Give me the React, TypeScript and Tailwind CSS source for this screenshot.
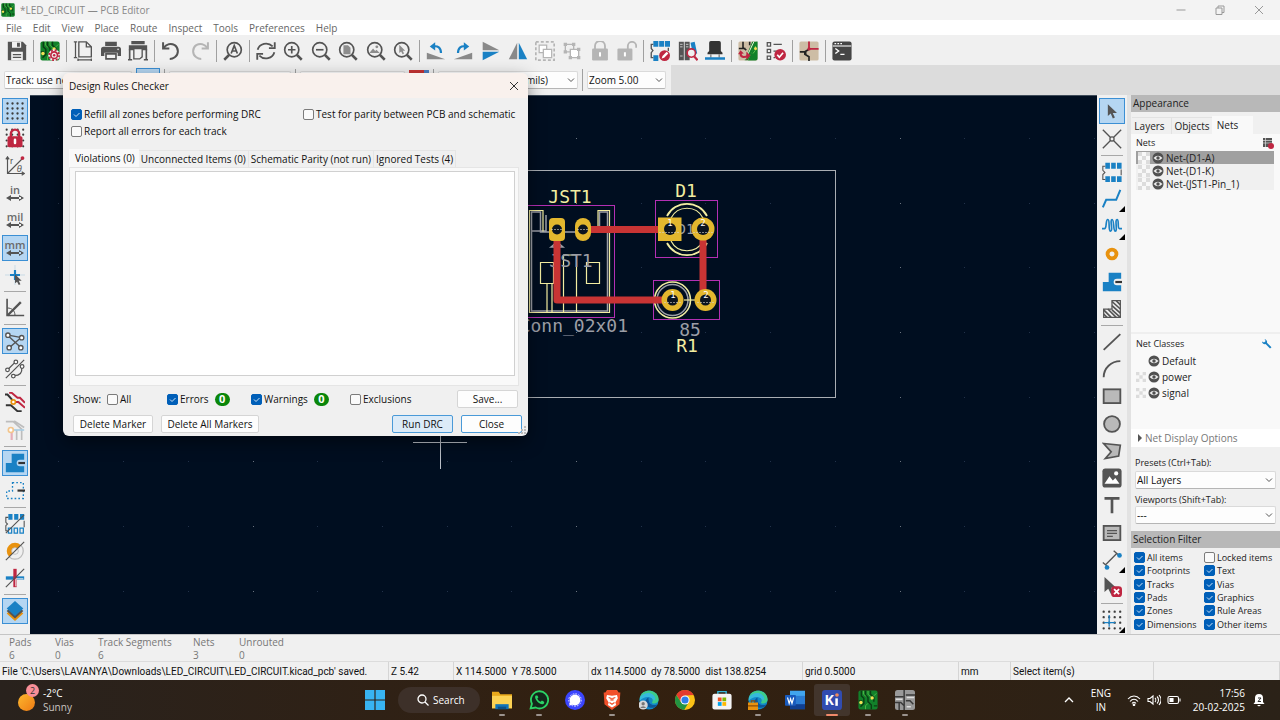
import React from "react";

const G = "#545454";
const B = "#1a81c4";
const R = "#bf2641";
const D = "#b5b5b5";

type Draw = React.ReactNode;

function Svg({ children, className = "size-5" }: { children: Draw; className?: string }) {
  return (
    <svg viewBox="0 0 24 24" fill="none" className={`${className} shrink-0`} aria-hidden="true">
      {children}
    </svg>
  );
}

const magnifier = (
  <>
    <circle cx="10.5" cy="10.5" r="8.5" stroke={G} strokeWidth="2" />
    <path d="M16.5 16.5L22.5 22.5" stroke={G} strokeWidth="3" />
  </>
);

const pcb = (
  <>
    <rect x="0.5" y="0.5" width="23" height="23" rx="2.5" fill="#12812a" />
    <path d="M4 1v6l3 3v6l-4 4M9 1v5l3 3v5l4 4v5M15 1v4l4 4v5M1 13h4M19 19h4" stroke="#0b3d14" strokeWidth="1.7" />
    <path d="M6.5 1v4l3.500 3M12 1v4l4 4v3M9 23v-4l3-3M22 4l-3 3" stroke="#5dbf4c" strokeWidth="1" />
    <circle cx="3.5" cy="15" r="2" fill="#f7e157" />
    <circle cx="17" cy="9.5" r="2" fill="#f7e157" />
  </>
);

const icons: Record<string, Draw> = {
  save: (
    <>
      <path d="M1 1h18l4 4v18H1z" fill={G} />
      <path d="M6 1h11v7H6zM5 13h14v10H5z" fill="#f0f0f0" />
      <path d="M12 2h3.500v5H12zM7 15.500h10v1.500H7zM7 19h10v1.500H7z" fill={G} />
    </>
  ),
  setup: (
    <>
      {pcb}
      <circle cx="17" cy="17" r="7" fill="#f0f0f0" />
      <circle cx="17" cy="17" r="4" stroke={R} strokeWidth="2" />
      <circle cx="17" cy="17" r="6" stroke={R} strokeWidth="2" strokeDasharray="2.400 2.300" />
      <circle cx="17" cy="17" r="1.500" fill={R} />
    </>
  ),
  page: (
    <>
      <path d="M7 1h9l6 6v12H7zM16 1v6h6" stroke={G} strokeWidth="1.600" />
      <path d="M3 1v19M1 1h4M1 20h4M6 22.500h16M6 21v3M22 21v3" stroke={G} strokeWidth="1.500" />
    </>
  ),
  print: (
    <>
      <path d="M5 1h14v5H5zM3 7h18a3 3 0 0 1 3 3v8h-4v-4H4v4H0v-8a3 3 0 0 1 3-3z" fill={G} />
      <path d="M6 15.500h12v6H6z" stroke={G} strokeWidth="2" />
      <circle cx="20.500" cy="10" r="1" fill="#f0f0f0" />
    </>
  ),
  plot: (
    <>
      <path d="M4 0h16v4H4zM1 5h22v6H1z" fill={G} />
      <path d="M2 10v13M22 10v13M0 22.500h5M19 22.500h5" stroke={G} strokeWidth="2" />
      <path d="M7 9h10v10l-3 2.500H7z" fill="#f0f0f0" stroke={G} strokeWidth="1.600" />
    </>
  ),
  undo: <path d="M2.500 1.500v7.500H10M3 8.500C6.500 3.500 12 2.500 16.500 5c5 3.500 5 11 0 14.500-2 1.500-4 2-6 2" stroke={G} strokeWidth="2.400" />,
  redo: <path d="M21.500 1.500v7.500H14M21 8.500C17.500 3.500 12 2.500 7.500 5c-5 3.500-5 11 0 14.500 2 1.500 4 2 6 2" stroke={D} strokeWidth="2.400" />,
  find: (
    <>
      <circle cx="13.500" cy="10.500" r="8.500" stroke={G} strokeWidth="2" />
      <path d="M7.500 16.500L1.500 22.500" stroke={G} strokeWidth="3" />
      <path d="M9.800 15l3.700-9.500L17.200 15M11 12h5" stroke={G} strokeWidth="2" />
    </>
  ),
  refresh: (
    <>
      <path d="M2 10.500C4 3 14 0.500 20 6.500M22 13.500C20 21 10 23.500 4 17.500" stroke={G} strokeWidth="2.200" />
      <path d="M22.500 1.500v7h-7M1.500 22.500v-7h7" stroke={G} strokeWidth="2.200" />
    </>
  ),
  zoomin: (
    <>
      {magnifier}
      <path d="M10.500 6v9M6 10.500h9" stroke={G} strokeWidth="2" />
    </>
  ),
  zoomout: (
    <>
      {magnifier}
      <path d="M6 10.500h9" stroke={G} strokeWidth="2" />
    </>
  ),
  zoompage: (
    <>
      {magnifier}
      <path d="M6.500 5h5.500l3 3v8H6.500z" fill="#8d8d8d" />
    </>
  ),
  zoomobj: (
    <>
      {magnifier}
      <path d="M4 14.500l4.500-5.500 2.500 3 1.500-1.500 4 4z" fill="#8d8d8d" />
      <circle cx="13" cy="7" r="1.700" fill="#8d8d8d" />
    </>
  ),
  zoomsel: (
    <>
      {magnifier}
      <path d="M7.500 4.500v10l2.300-2 1.700 3.500 1.800-1-1.600-3.300h3z" fill="#8d8d8d" />
    </>
  ),
  rotl: (
    <>
      <path d="M1 14l22 8H1z" fill="#898989" />
      <path d="M9 6.500c5-1 9 1.500 9 8" stroke={B} strokeWidth="2.600" />
      <path d="M11 1.500v10L4.500 6.500z" fill={B} />
    </>
  ),
  rotr: (
    <>
      <path d="M23 14L1 22h22z" fill="#898989" />
      <path d="M15 6.500c-5-1-9 1.500-9 8" stroke={B} strokeWidth="2.600" />
      <path d="M13 1.500v10l6.500-5z" fill={B} />
    </>
  ),
  mirv: (
    <>
      <path d="M2 1l20 10H2z" fill="#898989" />
      <path d="M2 13h20L2 23z" fill={B} />
    </>
  ),
  mirh: (
    <>
      <path d="M11 2v20H1z" fill="#898989" />
      <path d="M13 2v20h10z" fill={B} />
    </>
  ),
  group: (
    <>
      <rect x="1" y="1" width="22" height="22" stroke={D} strokeWidth="2" strokeDasharray="3.500 2.500" />
      <path d="M5 5h9v9H5z" fill="#fff" stroke={D} strokeWidth="1.500" />
      <path d="M10 10h10v10H10z" fill="#fff" stroke={D} strokeWidth="1.500" />
    </>
  ),
  ungroup: (
    <>
      <path d="M4 4h10v9H4z" stroke={D} strokeWidth="1.600" />
      <path d="M10 10h10v10H10z" fill="#fff" stroke={D} strokeWidth="1.600" />
      <path d="M2 2h4v4H2zM12 2h4v4h-4zM2 11h4v4H2zM18 8h4v4h-4zM18 18h4v4h-4zM8 18h4v4H8z" fill={D} />
    </>
  ),
  lock: (
    <>
      <path d="M6 10V6a6 6 0 0 1 12 0v4" stroke={D} strokeWidth="2.200" />
      <rect x="2.500" y="9" width="19" height="14.500" rx="1.500" fill={D} />
      <path d="M12 13.500v5" stroke="#fff" strokeWidth="2.400" />
    </>
  ),
  unlock: (
    <>
      <path d="M13 10V6a5 5 0 0 1 10 0v2" stroke={D} strokeWidth="2.200" />
      <rect x="0.500" y="9" width="18" height="14.500" rx="1.500" fill={D} />
      <path d="M9.500 13.500v5" stroke="#fff" strokeWidth="2.400" />
    </>
  ),
  fpedit: (
    <>
      <path d="M4 0h6v7H4zM11 0h6v7h-6zM18 0h6v7h-6zM4 17h6v7H4z" fill={B} />
      <path d="M4 4H1.500v5l2 2.500-2 2.500v6H4M22 8v4" stroke={G} strokeWidth="1.600" />
      <circle cx="17.500" cy="17.500" r="6.500" fill={R} />
      <path d="M14 21l1-3 5-5 2 2-5 5z" fill="#fff" />
    </>
  ),
  fplib: (
    <>
      <path d="M1 1h6v22H1zM8 1h6v22H8z" fill={G} />
      <path d="M2.500 4h3M9.500 4h3M2.500 7h3M9.500 7h3M2.500 18h3" stroke="#ddd" />
      <path d="M15 2l5-1 3 14-5 1z" fill={B} />
      <circle cx="16" cy="14.500" r="5" fill="#f0f0f0" stroke={R} strokeWidth="2" />
      <path d="M19.500 18.500l4 4.500" stroke={R} strokeWidth="2.600" />
    </>
  ),
  view3d: (
    <>
      <path d="M5 2a2 2 0 0 1 2-2h10a2 2 0 0 1 2 2v10l2 2v2H3v-2l2-2z" fill="#333" />
      <path d="M7 16v4M17 16v4" stroke="#777" strokeWidth="1.500" />
      <path d="M0 19.500h24v3H0z" fill={B} />
    </>
  ),
  update: (
    <>
      <rect x="0.500" y="0.500" width="23" height="23" rx="2" fill="#cdbda5" />
      <path d="M23.500 0.500V21a2.500 2.500 0 0 1-2.500 2.500h-9L22 1z" fill="#12812a" />
      <path d="M17 1h6L12 23h-4z" fill="#12812a" />
      <path d="M19 1L9 22" stroke="#e8f2d8" strokeWidth="1.200" />
      <path d="M6 1v7l4 3M1 9h8M14 1v4" stroke="#222" strokeWidth="1.900" />
      <path d="M21 6v5l-3 4" stroke="#5dbf4c" strokeWidth="1.200" />
      <circle cx="21" cy="9" r="1.800" fill="#f7e157" />
      <path d="M3 14c0 6 4 6 9 4" stroke={R} strokeWidth="2.600" />
      <path d="M10 13l5 4-5 6z" fill={R} />
      <path d="M0 16l3-5 4 4z" fill={R} />
    </>
  ),
  drc: (
    <>
      <path d="M1.500 2h4v4h-4zM1.500 10h4v4h-4zM1.500 18h4v4h-4zM9 4h10M9 12h4M9 20h2" stroke={G} strokeWidth="1.500" />
      <circle cx="17" cy="16.500" r="7" fill={R} />
      <path d="M13.500 16.500l2.500 3 4.500-5.500" stroke="#fff" strokeWidth="2" />
    </>
  ),
  sch: (
    <>
      <rect x="0.500" y="0.500" width="23" height="23" rx="2" fill="#cdbda5" />
      <path d="M12 0.500v9h11.500" stroke={R} strokeWidth="2.200" />
      <path d="M1 13h6l5-3M7 13v3l5 3v5M8 12v5" stroke="#222" strokeWidth="2" />
      <circle cx="12" cy="9.500" r="2" fill={R} />
    </>
  ),
  console: (
    <>
      <rect x="0.500" y="0.500" width="23" height="23" rx="2.500" fill="#454545" />
      <path d="M1 6h22" stroke="#eee" strokeWidth="1.400" />
      <path d="M3 3.200h2M6.500 3.200h2M10 3.200h2" stroke="#fff" strokeWidth="1.400" />
      <path d="M4 9l4 3-4 3M10 16h5" stroke="#fff" strokeWidth="1.600" />
    </>
  ),
  grid: <path d="M3 3h18.100M3 9h18.100M3 15h18.100M3 21h18.100" stroke="#3d3d3d" strokeWidth="2.800" strokeLinecap="round" strokeDasharray="0.010 6" />,
  gridlock: (
    <>
      <path d="M2 2h20.100M2 8h20.100M2 15h20.100M2 22h20.100" stroke="#3d3d3d" strokeWidth="2.600" strokeLinecap="round" strokeDasharray="0.010 6.600" />
      <path d="M7 11V7a5 5 0 0 1 10 0v4" stroke={R} strokeWidth="2.800" />
      <rect x="3" y="10" width="18" height="13" rx="2" fill={R} />
      <path d="M12 14v4" stroke="#fff" strokeWidth="3" strokeLinecap="round" />
    </>
  ),
  polar: (
    <>
      <path d="M3 2v19h19M1 4l2-3 2 3M20 19l3 2-3 2M3 21L21 3" stroke={G} strokeWidth="1.400" />
      <circle cx="21" cy="2.500" r="2.300" fill={R} />
      <text x="6" y="10" fontSize="11" fill={G} fontFamily="Liberation Sans, sans-serif">r</text>
      <text x="14" y="19" fontSize="11" fontStyle="italic" fill={G} fontFamily="Liberation Sans, sans-serif">θ</text>
    </>
  ),
  cursor: (
    <>
      <path d="M12 0v24M0 12h24" stroke="#c9dbe6" strokeWidth="1.200" />
      <path d="M12 6v12M6 12h12" stroke={B} strokeWidth="2.600" />
      <path d="M12 11v11l2.500-2 2 4 2-1-2-4h3.500z" fill={G} />
    </>
  ),
  angle: (
    <>
      <path d="M2.500 1v20H23" stroke={G} strokeWidth="2" />
      <path d="M3 21L19 5" stroke={G} strokeWidth="2.800" />
      <path d="M3 12c5 0 9 3 9 9" stroke={G} strokeWidth="1.200" />
    </>
  ),
  rats: (
    <>
      <path d="M5 7L18 19M5 20L18 9M4 5l16 3" stroke={G} strokeWidth="1.700" />
      <g fill="#fff" stroke={G} strokeWidth="1.600">
        <circle cx="3.500" cy="5" r="2.600" />
        <circle cx="20" cy="8" r="2.600" />
        <circle cx="5" cy="20" r="2.600" />
        <circle cx="19" cy="20" r="2.600" />
      </g>
    </>
  ),
  curved: (
    <>
      <path d="M1 23L23 1M4 12l8-8M11 20c7 0 10-4 9-9" stroke={G} strokeWidth="1.500" />
      <g fill="#fff" stroke={G} strokeWidth="1.500">
        <circle cx="3" cy="13" r="2.200" />
        <circle cx="13" cy="3.500" r="2.200" />
        <circle cx="20.500" cy="9" r="2.200" />
        <circle cx="10" cy="20.500" r="2.200" />
      </g>
    </>
  ),
  inactive: (
    <>
      <path d="M5 1h3l7 6h3l6 6M12 12h4l8 7" stroke={R} strokeWidth="2.400" />
      <path d="M0 3h3l7 8M1 16h6l8 7h5" stroke="#333" strokeWidth="2.400" />
      <circle cx="10" cy="12" r="2.500" fill="#fff" stroke="#e8920f" strokeWidth="2" />
    </>
  ),
  hicon: (
    <>
      <path d="M1 2h9l10 9v13M11 1l12 8M14 12v12" stroke="#bdbdbd" strokeWidth="2" />
      <path d="M8 11v13" stroke="#e6aeb8" strokeWidth="2.600" />
      <path d="M10 12h13" stroke="#a9cde3" strokeWidth="2" />
      <circle cx="7" cy="12" r="3" fill="#fff" stroke="#f3c58c" strokeWidth="2" />
    </>
  ),
  zone: (
    <>
      <path d="M8 1h15v7h-5a4 4 0 0 0 0 8h5v7H1V12h7z" fill={B} />
      <path d="M16 12h8" stroke="#333" strokeWidth="2.600" />
    </>
  ),
  zoneoutline: (
    <>
      <path d="M9 2h13v19H2v-9h7z" stroke={B} strokeWidth="1.600" strokeDasharray="2 2.500" />
      <path d="M15 11.500h9" stroke="#333" strokeWidth="2.600" />
    </>
  ),
  padsk: (
    <>
      <path d="M4 0h5v7H4zM11 0h5v7h-5zM18 0h5v7h-5z" fill={B} />
      <path d="M4 17h4v6H4zM11 17h4v6h-4zM18 17h4v6h-4z" stroke={B} strokeWidth="1.500" />
      <path d="M4 4H1v6l2 2-2 2v6h2M23 8v8M1 23L23 1" stroke={G} strokeWidth="1.300" />
    </>
  ),
  viask: (
    <>
      <path d="M19 5L5 19A9.800 9.800 0 0 1 19 5z" fill="#e8920f" />
      <path d="M19 5a9.800 9.800 0 0 1-14 14" stroke="#bbb" strokeWidth="1.500" />
      <circle cx="12" cy="12" r="4" fill="#f0f0f0" stroke="#bbb" />
      <path d="M1 23L23 1" stroke={G} strokeWidth="1.400" />
    </>
  ),
  tracksk: (
    <>
      <path d="M1 12h22" stroke={B} strokeWidth="4" />
      <path d="M12 1v22" stroke={R} strokeWidth="4" />
      <path d="M13 13v9M13 13h9" stroke="#eee" strokeWidth="1.200" />
      <path d="M1 23L23 1" stroke={G} strokeWidth="1.400" />
    </>
  ),
  layers: (
    <>
      <path d="M12 6l10 9-10 9-10-9z" fill="#e8920f" />
      <path d="M12 3l10 9-10 9-10-9z" fill="#545454" />
      <path d="M12 0l10 9-10 9-10-9z" fill={B} />
    </>
  ),
  arrow: <path d="M7 4v14l3.500-3 2.500 6 2.500-1.200-2.600-5.300H18z" fill={G} />,
  ratshl: (
    <>
      <path d="M1 1l22 22M23 1L1 23" stroke={G} strokeWidth="1.600" />
      <circle cx="12" cy="12" r="2.500" fill="#f0f0f0" stroke={G} strokeWidth="1.500" />
    </>
  ),
  footprint: (
    <>
      <path d="M4 1h5.500v7H4zM11 1h5.500v7H11zM18 1h5.500v7H18zM4 17h5.500v7H4zM11 17h5.500v7H11zM18 17h5.500v7H18z" fill={B} />
      <path d="M4 5H1v5l2.500 2.500L1 15v6h3M23 9v7" stroke={G} strokeWidth="1.300" />
    </>
  ),
  route: <path d="M1 22l4-9h12l5-12" stroke={B} strokeWidth="2.400" />,
  tune: <path d="M0 14h3c3 0 1-11 4-11s0 14 3.300 14S9 3 12 3s1 14 4 14S15 3 18 3s0 11 3 11h3" stroke={B} strokeWidth="2" />,
  via: <circle cx="12" cy="12" r="5.300" stroke="#e8920f" strokeWidth="4.600" />,
  rulearea: (
    <>
      <path d="M12 2h10v20H2V12h10z" stroke={G} strokeWidth="1.500" />
      <path d="M12 3l10 9M12 8l10 9M12 13l10 9M7 12l10 10M2 13l9 9M2 18l4 4M17 2l5 5" stroke={G} strokeWidth="2" />
    </>
  ),
  line: <path d="M2 21.500L22 2.500" stroke={G} strokeWidth="2.200" />,
  arc: <path d="M2 22C2 11 11 2.500 22 2.500" stroke={G} strokeWidth="2.200" />,
  rect: <rect x="2" y="4" width="20" height="16.500" fill="#b9b9b9" stroke={G} strokeWidth="2.200" />,
  circle: <circle cx="12" cy="12" r="9.500" fill="#b9b9b9" stroke={G} strokeWidth="2.200" />,
  poly: <path d="M2 3l20 2-2 13L4 21l7-8z" fill="#b9b9b9" stroke={G} strokeWidth="2" />,
  image: (
    <>
      <rect x="0.500" y="0.500" width="23" height="23" rx="3.500" fill={G} />
      <path d="M3 19l6-9 4 5 3-3 5 7z" fill="#fff" />
      <circle cx="17" cy="6.500" r="2.500" fill="#fff" />
    </>
  ),
  text: <path d="M3 4h18M12 4v18" stroke={G} strokeWidth="3.200" />,
  textbox: (
    <>
      <rect x="2" y="3.500" width="20" height="17" fill="#b9b9b9" stroke={G} strokeWidth="2.200" />
      <path d="M6 9h12M6 12.500h12M6 16h7" stroke={G} strokeWidth="1.500" />
    </>
  ),
  dimension: (
    <>
      <path d="M4 18L18 4M14 1l7 6M1 15l6 5" stroke={G} strokeWidth="1.600" />
      <circle cx="21" cy="6.500" r="2.800" fill={B} />
      <circle cx="6" cy="21" r="2.800" fill={B} />
    </>
  ),
  del: (
    <>
      <path d="M3 0v18l4.500-4 3.500 7 3-1.500L11 13h6z" fill={G} />
      <rect x="11" y="11" width="13" height="13" rx="4" fill={R} />
      <path d="M14.500 14.500l6 6M20.500 14.500l-6 6" stroke="#fff" strokeWidth="2.200" />
    </>
  ),
  gridorigin: (
    <>
      <path d="M2 2h20.100M2 8.600h20.100M2 15.200h20.100M2 22h20.100" stroke="#3d3d3d" strokeWidth="2.800" strokeLinecap="round" strokeDasharray="0.010 6.600" />
      <path d="M8.600 6v14M2 15.200h14" stroke={B} strokeWidth="1.500" />
    </>
  ),
};

const topGroups: { width: string; items: [string, string][] }[] = [
  { width: "w-5", items: [["save", "Save"]] },
  { width: "w-5", items: [["setup", "Board setup"]] },
  { width: "w-[75px]", items: [["page", "Page settings"], ["print", "Print"], ["plot", "Plot"]] },
  { width: "w-[49px]", items: [["undo", "Undo"], ["redo", "Redo"]] },
  { width: "w-5", items: [["find", "Find"]] },
  {
    width: "w-[157px]",
    items: [["refresh", "Refresh"], ["zoomin", "Zoom in"], ["zoomout", "Zoom out"], ["zoompage", "Zoom to fit"], ["zoomobj", "Zoom to objects"], ["zoomsel", "Zoom to selection"]],
  },
  {
    width: "w-[211px]",
    items: [["rotl", "Rotate left"], ["rotr", "Rotate right"], ["mirv", "Mirror vertically"], ["mirh", "Mirror horizontally"], ["group", "Group"], ["ungroup", "Ungroup"], ["lock", "Lock"], ["unlock", "Unlock"]],
  },
  { width: "w-[75px]", items: [["fpedit", "Footprint editor"], ["fplib", "Footprint browser"], ["view3d", "3D viewer"]] },
  { width: "w-12", items: [["update", "Update from schematic"], ["drc", "Design rules checker"]] },
  { width: "w-5", items: [["sch", "Schematic editor"]] },
  { width: "w-5", items: [["console", "Scripting console"]] },
];

type Tool = { icon: string; label: string; on?: boolean; more?: boolean; unit?: string };

const leftGroups: { height: string; items: Tool[] }[] = [
  {
    height: "h-[190px]",
    items: [
      { icon: "grid", label: "Show grid", on: true },
      { icon: "gridlock", label: "Grid overrides" },
      { icon: "polar", label: "Polar coordinates" },
      { icon: "", unit: "in", label: "Inches" },
      { icon: "", unit: "mil", label: "Mils" },
      { icon: "", unit: "mm", label: "Millimeters", on: true },
      { icon: "cursor", label: "Full cursor" },
    ],
  },
  { height: "h-[26px]", items: [{ icon: "angle", label: "Limit angle" }] },
  { height: "h-[54px]", items: [{ icon: "rats", label: "Show ratsnest", on: true }, { icon: "curved", label: "Curved ratsnest" }] },
  { height: "h-[54px]", items: [{ icon: "inactive", label: "Dim inactive layers" }, { icon: "hicon", label: "Highlight nets" }] },
  { height: "h-[54px]", items: [{ icon: "zone", label: "Filled zones", on: true }, { icon: "zoneoutline", label: "Zone outlines" }] },
  { height: "h-20", items: [{ icon: "padsk", label: "Sketch pads" }, { icon: "viask", label: "Sketch vias" }, { icon: "tracksk", label: "Sketch tracks" }] },
  { height: "h-[26px]", items: [{ icon: "layers", label: "Appearance manager", on: true }] },
];

const rightGroups: { height: string; items: Tool[] }[] = [
  { height: "h-[54px]", items: [{ icon: "arrow", label: "Select", on: true }, { icon: "ratshl", label: "Local ratsnest" }] },
  {
    height: "h-[163px]",
    items: [
      { icon: "footprint", label: "Place footprint" },
      { icon: "route", label: "Route tracks", more: true },
      { icon: "tune", label: "Tune length", more: true },
      { icon: "via", label: "Place via" },
      { icon: "zone", label: "Draw zone" },
      { icon: "rulearea", label: "Rule area" },
    ],
  },
  {
    height: "h-[271px]",
    items: [
      { icon: "line", label: "Line" },
      { icon: "arc", label: "Arc" },
      { icon: "rect", label: "Rectangle" },
      { icon: "circle", label: "Circle" },
      { icon: "poly", label: "Polygon" },
      { icon: "image", label: "Image" },
      { icon: "text", label: "Text" },
      { icon: "textbox", label: "Text box" },
      { icon: "dimension", label: "Dimension", more: true },
      { icon: "del", label: "Delete" },
    ],
  },
  { height: "h-[26px]", items: [{ icon: "gridorigin", label: "Grid origin", more: true }] },
];

function SideBar({ groups, label }: { groups: { height: string; items: Tool[] }[]; label: string }) {
  return (
    <div role="toolbar" aria-label={label} className="flex w-[30px] shrink-0 flex-col items-center gap-[3px] bg-[#f0f0f0] pt-[3px]">
      {groups.map((g, i) => (
        <React.Fragment key={i}>
          {i > 0 && <div className="h-px w-[22px] bg-[#a8a8a8]" />}
          <div className={`flex flex-col justify-between ${g.height}`}>
            {g.items.map((t) => (
              <button
                key={t.label}
                aria-label={t.label}
                className={`relative flex size-[26px] flex-col items-center justify-center ${t.on ? "border border-[#3b8fd4] bg-[#b5d6f2]" : ""}`}
              >
                {t.unit ? (
                  <>
                    <span className="text-[11px] leading-[10px] font-semibold text-[#6a6a6a]">{t.unit}</span>
                    <svg viewBox="0 0 18 6" className="h-1.5 w-[18px]" aria-hidden="true">
                      <path d="M0 3l5-3v6zM18 3l-5-3v6zM3 2h12v2H3z" fill={G} />
                    </svg>
                  </>
                ) : (
                  <Svg>{icons[t.icon]}</Svg>
                )}
                {t.more && (
                  <svg viewBox="0 0 6 6" className="absolute right-0 bottom-0 size-1.5" aria-hidden="true">
                    <path d="M6 0v6H0z" fill="#000" />
                  </svg>
                )}
              </button>
            ))}
          </div>
        </React.Fragment>
      ))}
    </div>
  );
}

function Check({ label, checked = false }: { label: string; checked?: boolean }) {
  return (
    <label className="flex items-center gap-0.5 whitespace-nowrap">
      <span className="relative flex size-[11px] shrink-0">
        <input
          type="checkbox"
          defaultChecked={checked}
          className="peer size-[11px] appearance-none rounded-[2px] border border-[#7b7b7b] bg-[#fafafa] checked:border-[#005fb8] checked:bg-[#005fb8]"
        />
        <svg viewBox="0 0 11 11" className="pointer-events-none absolute inset-0 hidden size-[11px] peer-checked:block" aria-hidden="true">
          <path d="M3 5.500l2 2L8.500 4" stroke="#cfe3f5" fill="none" />
        </svg>
      </span>
      {label}
    </label>
  );
}

function Select({ value, label, className }: { value: string; label: string; className: string }) {
  return (
    <div className={`relative flex ${className}`}>
      <select aria-label={label} className="h-[18px] w-full appearance-none rounded-[2px] border border-[#dadada] border-b-[#b5b5b5] bg-[#fdfdfd] pl-px text-[10px] leading-4 text-[#111]">
        <option>{value}</option>
      </select>
      <svg viewBox="0 0 8 8" className="pointer-events-none absolute top-[5px] right-[3px] size-2" aria-hidden="true">
        <path d="M1 2.500l3 3 3-3" stroke="#555" fill="none" />
      </svg>
    </div>
  );
}

function Eye() {
  return (
    <svg viewBox="0 0 12 12" className="size-3 shrink-0" aria-hidden="true">
      <circle cx="6" cy="6" r="5.500" fill="#505050" />
      <path d="M1.500 6Q6 1.500 10.500 6Q6 10.500 1.500 6z" fill="#eee" />
      <circle cx="6" cy="6" r="1.700" fill="#505050" />
    </svg>
  );
}

function Swatch({ small = false }: { small?: boolean }) {
  return (
    <svg viewBox="0 0 12 12" className={small ? "size-2.5 shrink-0" : "size-3 shrink-0"} aria-hidden="true">
      <path d="M0 0h12v12H0z" fill="#f8f8f8" />
      <path d="M0 0h4v4H0zM8 0h4v4H8zM4 4h4v4H4zM0 8h4v4H0zM8 8h4v4H8z" fill="#dcdcdc" />
    </svg>
  );
}

const gridX = [58, 123, 188, 253, 317, 382, 447, 511, 576, 641, 705, 770, 835, 900, 964, 1029, 1094];
const gridY = [138, 203, 267, 332, 397, 461, 526, 591];

function Board() {
  const silk = "#f2eda1";
  const fab = "#9c9ea6";
  const gold = "#e3b72e";
  const hole = "#0b1420";
  const mono = "DejaVu Sans Mono, monospace";
  return (
    <svg width="1067" height="539" viewBox="30 96 1067 539" className="absolute top-0 left-0" aria-label="Board">
      {gridX.map((x, i) =>
        gridY.map((y) => <rect key={`${x}-${y}`} x={x} y={y} width="1" height="1" fill={i % 5 === 3 ? "#6b7480" : "#22324a"} />),
      )}
      <rect x="470.500" y="170.500" width="365" height="227" fill="none" stroke="#a9adb3" />
      <g fill="none" stroke="#b32fb3">
        <rect x="520.500" y="205.500" width="94" height="112" />
        <rect x="655.500" y="200.500" width="62" height="57" />
        <rect x="653.500" y="280.500" width="66" height="39" />
      </g>
      <g fill="none" stroke={fab} strokeWidth="1.500">
        <path d="M531.500 212h9v20h59v-20h8v99h-76zM546 215v16h-15" />
        <path d="M551 247l6-5 6 5z" />
      </g>
      <g fill="none" stroke={silk} strokeWidth="1.200">
        <path d="M543 231.500v-21h-13.500v102h80v-102H598v21" />
        <path d="M540.500 262.500h13v21h-13zM586.500 262.500h13v21h-13zM547 283v29M552 283v29M563.500 312v-57h13v57" />
        <path d="M667 216a22.500 22.500 0 0 1 40 0M667 243a22.500 22.500 0 0 0 40 0" strokeWidth="1.800" />
        <path d="M671 218a18 18 0 0 1 32 0M671 241a18 18 0 0 0 32 0" />
        <circle cx="672.500" cy="300" r="18" strokeWidth="1.600" />
        <circle cx="672.500" cy="300" r="15.500" stroke={fab} strokeWidth="1.500" />
        <path d="M684 300h11" />
      </g>
      <g fontFamily={mono} fontSize="18">
        <text x="571" y="267" textAnchor="middle" fill={fab}>JST1</text>
        <text x="628" y="332" textAnchor="end" fill={fab}>Conn_02x01</text>
        <text x="690" y="336" textAnchor="middle" fill={fab}>85</text>
        <text x="686" y="234" textAnchor="middle" fontSize="14" fill={fab}>D1</text>
      </g>
      <g fill="none" stroke="#c83434" strokeWidth="7">
        <path d="M583 229.500H668M557 230v70h115M703 229v71" strokeLinejoin="round" />
      </g>
      <g fill={gold}>
        <rect x="549" y="218" width="16" height="23" rx="4" />
        <rect x="575" y="218" width="16" height="23" rx="8" />
        <rect x="658" y="217.500" width="23.500" height="23.500" />
        <circle cx="703" cy="229" r="11.500" />
        <circle cx="672.500" cy="300" r="11" />
        <circle cx="705.500" cy="300" r="11" />
      </g>
      <g fill={hole}>
        <circle cx="557" cy="229.500" r="5" />
        <circle cx="583" cy="229.500" r="5" />
        <circle cx="670" cy="229" r="6" />
        <circle cx="703" cy="229" r="6" />
        <circle cx="672.500" cy="300" r="5.500" />
        <circle cx="705.500" cy="300" r="5.500" />
      </g>
      <g stroke="#d8d3c8" strokeWidth="1" strokeDasharray="2 1" opacity="0.6">
        <path d="M551 229.500h12M577 229.500h12M659 232.500h21M693 232.500h20M664 302.500h18M697 302.500h17" />
      </g>
      <g fontFamily={mono} fontSize="9" fill="#fff" textAnchor="middle">
        <text x="670" y="226">1</text>
        <text x="703" y="226">2</text>
        <text x="673" y="298">1</text>
        <text x="706" y="298">2</text>
      </g>
      <g fontFamily={mono} fontSize="18" fill={silk} textAnchor="middle">
        <text x="570" y="203">JST1</text>
        <text x="686" y="197">D1</text>
        <text x="687" y="352">R1</text>
      </g>
      <path d="M413 442.500h54M440.500 400v69" stroke="#b9bec6" />
    </svg>
  );
}

function DrcDialog() {
  const button = "h-[18px] rounded-[2px] border text-[10px] leading-4";
  return (
    <div role="dialog" aria-label="Design Rules Checker" className="absolute top-[73px] left-[63px] flex h-[363px] w-[465px] flex-col overflow-hidden rounded-[6px] bg-[#f0f0f0] text-[#111] shadow-[0_6px_18px_rgba(0,0,0,0.45)]">
      <header className="flex h-[25px] items-center justify-between bg-[#f9f1ed] pr-[9px] pl-1.5">
        <h2 className="text-[10px]">Design Rules Checker</h2>
        <button aria-label="Close dialog">
          <svg viewBox="0 0 10 10" className="size-2.5" aria-hidden="true">
            <path d="M1 1l8 8M9 1L1 9" stroke="#333" />
          </svg>
        </button>
      </header>
      <div className="grid grid-cols-[232px_auto] gap-y-[3px] pt-[9px] pl-2 leading-[14px]">
        <Check label="Refill all zones before performing DRC" checked />
        <Check label="Test for parity between PCB and schematic" />
        <Check label="Report all errors for each track" />
      </div>
      <div role="tablist" className="mt-[11px] flex items-end pl-1.5">
        <button role="tab" aria-selected="true" className="h-[18px] bg-[#f9f9f9] pr-1 pl-1.5 leading-4">Violations (0)</button>
        {["Unconnected Items (0)", "Schematic Parity (not run)", "Ignored Tests (4)"].map((t) => (
          <button key={t} role="tab" className="h-[17px] border-t border-r border-[#e5e5e5] px-0.5 leading-4">{t}</button>
        ))}
      </div>
      <div className="mr-[9px] ml-1.5 flex-1 border border-[#e5e5e5] bg-[#f9f9f9] pt-[3px] pr-[3px] pb-[9px] pl-[5px]">
        <div role="tabpanel" aria-label="Violations" className="h-full border border-[#d0d0d0] bg-white" />
      </div>
      <div className="mt-0.5 flex h-[22px] items-center pr-2.5 pl-2.5">
        <div className="flex w-[94px] items-center gap-1.5">
          <span>Show:</span>
          <Check label="All" />
        </div>
        <div className="flex w-[84px] items-center gap-1.5">
          <Check label="Errors" checked />
          <Count />
        </div>
        <div className="flex w-[99px] items-center gap-1.5">
          <Check label="Warnings" checked />
          <Count />
        </div>
        <Check label="Exclusions" />
        <button className={`${button} ml-auto w-[61px] border-[#d5d5d5] bg-[#fdfdfd]`}>Save...</button>
      </div>
      <div className="flex items-center gap-2 pt-[5px] pr-1.5 pb-[3px] pl-2.5">
        <button className={`${button} w-20 border-[#d5d5d5] bg-[#fdfdfd]`}>Delete Marker</button>
        <button className={`${button} w-[98px] border-[#d5d5d5] bg-[#fdfdfd]`}>Delete All Markers</button>
        <button className={`${button} ml-auto w-[61px] border-[#4a9ad8] bg-[#dcebf8]`}>Run DRC</button>
        <button className={`${button} w-[61px] border-[#4a9ad8] bg-[#fdfdfd]`}>Close</button>
      </div>
      <svg viewBox="0 0 8 8" className="absolute right-0.5 bottom-0.5 size-2" aria-hidden="true">
        <path d="M6 0h2v2H6zM3 3h2v2H3zM6 3h2v2H6zM0 6h2v2H0zM3 6h2v2H3zM6 6h2v2H6z" fill="#bbb" />
      </svg>
    </div>
  );
}

function Count() {
  return <span className="flex h-[13px] w-[15px] items-center justify-center rounded-full bg-[#0a860a] text-[11px] font-bold text-white">0</span>;
}

const nets = ["Net-(D1-A)", "Net-(D1-K)", "Net-(JST1-Pin_1)"];
const filters: [string, boolean][] = [
  ["All items", true],
  ["Locked items", false],
  ["Footprints", true],
  ["Text", true],
  ["Tracks", true],
  ["Vias", true],
  ["Pads", true],
  ["Graphics", true],
  ["Zones", true],
  ["Rule Areas", true],
  ["Dimensions", true],
  ["Other items", true],
];

function AppearancePanel() {
  return (
    <aside className="flex w-[149px] shrink-0 flex-col bg-[#f0f0f0] text-[9px] text-[#222]">
      <h2 className="h-[17px] bg-[#b8b8b8] pl-0.5 text-[10px] leading-[17px]">Appearance</h2>
      <div role="tablist" className="mt-1 flex items-end pl-px text-[10px]">
        <button role="tab" className="h-[17px] w-10 border-t border-r border-[#e2e2e2] pr-1">Layers</button>
        <button role="tab" className="h-[17px] w-10 border-t border-[#e2e2e2]">Objects</button>
        <button role="tab" aria-selected="true" className="h-[18px] w-[41px] bg-[#f9f9f9] pr-2.5 leading-4">Nets</button>
      </div>
      <section className="flex flex-1 flex-col bg-[#f9f9f9]">
        <div className="flex h-[17px] items-center justify-between pr-1.5 pl-[5px]">
          <h3>Nets</h3>
          <svg viewBox="0 0 12 12" className="size-3" aria-hidden="true">
            <path d="M1 1h9v9H1z" fill={G} />
            <path d="M1 3.500h9M1 6h9M3.500 1v9" stroke="#ddd" strokeWidth="0.700" />
            <circle cx="9" cy="9" r="3" fill={R} />
          </svg>
        </div>
        <ul className="mr-1.5 ml-[5px] text-[10px]">
          {nets.map((n, i) => (
            <li key={n} className={`flex h-[13px] items-center gap-0.5 pl-0.5 ${i === 0 ? "bg-[#a0a0a0]" : "bg-[#f0f0f0]"}`}>
              <Swatch />
              <Eye />
              <span>{n}</span>
            </li>
          ))}
        </ul>
        <div className="mt-auto flex h-[21px] items-center justify-between border-t-2 border-[#efefef] pr-2 pl-[5px]">
          <h3>Net Classes</h3>
          <svg viewBox="0 0 10 10" className="size-2.5" aria-hidden="true">
            <path d="M0 2.500a2.700 2.700 0 0 0 3.600 2.500L8 9.500l1.500-1.300L5 3.800A2.700 2.700 0 0 0 2.500 0.300L3.700 2 2 3.500z" fill={B} />
          </svg>
        </div>
        <ul className="mb-7 pl-[5px] text-[10px]">
          {["Default", "power", "signal"].map((n, i) => (
            <li key={n} className="flex h-4 items-center gap-0.5">
              {i === 0 ? <span className="w-2.5" /> : <Swatch small />}
              <Eye />
              <span>{n}</span>
            </li>
          ))}
        </ul>
        <button className="flex h-[18px] items-center gap-[3px] bg-white pl-[7px] text-[10px] text-[#777]">
          <svg viewBox="0 0 4 8" className="h-2 w-1" aria-hidden="true">
            <path d="M0 0l4 4-4 4z" fill="#555" />
          </svg>
          Net Display Options
        </button>
      </section>
      <section className="flex flex-col px-1 pt-[9px]">
        <span className="leading-[13px]">Presets (Ctrl+Tab):</span>
        <Select value="All Layers" label="Presets" className="mt-0.5 w-full" />
        <span className="mt-1 leading-[13px]">Viewports (Shift+Tab):</span>
        <Select value="---" label="Viewports" className="w-full" />
      </section>
      <h2 className="mt-[7px] h-[17px] bg-[#b8b8b8] pl-0.5 text-[10px] leading-[17px]">Selection Filter</h2>
      <div className="mb-[3px] grid h-[83px] grid-cols-[70px_auto] items-center pt-[3px] pl-[3px] leading-[13px]">
        {filters.map(([l, c]) => (
          <Check key={l} label={l} checked={c} />
        ))}
      </div>
    </aside>
  );
}

const edge = (
  <>
    <circle cx="12" cy="12" r="11.500" fill="#1389c9" />
    <path d="M1 9C3 2 9 0 14 1c6 1 10 6 9.500 11-.5 4-5 5-8 3.500 2-3 1-7-4-7.500C7 7.500 3 9 1 13z" fill="#3dcb8b" />
    <path d="M1 9c4-6 12-7 16-3 3 2 3 6 1 7-2-5-11-7-17 0z" fill="#35b9dc" />
    <path d="M11.500 9c-5 2-5 10 1 12 4 1 8 0 10-4-6 3-12 0-11-8z" fill="#0c5697" />
  </>
);

const tasks: { label: string; art: Draw; run?: boolean; active?: boolean }[] = [
  {
    label: "File Explorer",
    run: true,
    art: (
      <>
        <path d="M0 2h8l2 3h14v17H0z" fill="#e9a91c" />
        <path d="M0 7h24v15H0z" fill="#fcd254" />
        <path d="M4 17h16v6H4z" fill="#1273b8" />
        <path d="M7 20h10v3H7z" fill="#0c4f85" />
      </>
    ),
  },
  {
    label: "WhatsApp",
    run: true,
    art: (
      <>
        <path d="M2 22l1.500-5.500A10.300 10.300 0 1 1 8 21z" fill="#13271b" stroke="#2bd366" strokeWidth="2.200" />
        <path d="M8 6.500c-3 3 4 11 8.500 10.500 2-.5 2-2.500 1.500-3l-2.500-1.300-1.500 1.500c-2-.7-3.500-2.400-4-4l1.300-1.400L10 6.500z" fill="#2bd366" />
      </>
    ),
  },
  {
    label: "Signal",
    art: (
      <>
        <circle cx="12" cy="12" r="12" fill="#3b45fd" />
        <circle cx="12" cy="12" r="6.500" fill="#fff" />
        <circle cx="12" cy="12" r="7.500" stroke="#fff" strokeDasharray="2 1.500" />
        <path d="M5 19l1-5 4 3z" fill="#fff" />
      </>
    ),
  },
  {
    label: "Brave",
    run: true,
    art: (
      <>
        <path d="M6 0h12l2 3 2 0-1 14-9 7-9-7L2 3h2z" fill="#f1512b" />
        <path d="M6 6l6 1 6-1 1 4-3 5 1 3-5 3-5-3 1-3-3-5z" fill="#fff" />
        <path d="M8 9l3 1v3M16 9l-3 1v3M9 15l3 2 3-2" stroke="#f1512b" strokeWidth="1.500" />
      </>
    ),
  },
  {
    label: "Edge profile",
    art: (
      <>
        {edge}
        <circle cx="5" cy="18" r="5.500" fill="#d8d8d8" />
        <circle cx="5" cy="16.500" r="2" fill="#777" />
        <path d="M1.500 21.500a4 4 0 0 1 7 0z" fill="#777" />
      </>
    ),
  },
  {
    label: "Chrome",
    art: (
      <>
        <circle cx="12" cy="12" r="12" fill="#fbc116" />
        <path d="M1.600 6A12 12 0 0 1 22.400 6L12 6.500 7 14z" fill="#e33b2e" />
        <path d="M1.600 6A12 12 0 0 0 11 24l5-8.500-9-1z" fill="#229342" />
        <circle cx="12" cy="12" r="5.500" fill="#fff" />
        <circle cx="12" cy="12" r="4.300" fill="#2f7de9" />
      </>
    ),
  },
  {
    label: "Microsoft Store",
    art: (
      <>
        <path d="M7 5V2h10v3" stroke="#35b9dc" strokeWidth="1.600" />
        <rect x="0.500" y="4.500" width="23" height="19" rx="2.500" fill="#f4f4f4" />
        <path d="M7 9h4.500v4.500H7z" fill="#f05024" />
        <path d="M12.500 9H17v4.500h-4.500z" fill="#7eb900" />
        <path d="M7 14.500h4.500V19H7z" fill="#00a3ee" />
        <path d="M12.500 14.500H17V19h-4.500z" fill="#feb800" />
      </>
    ),
  },
  {
    label: "Edge work",
    run: true,
    art: (
      <>
        {edge}
        <path d="M0 15h12v9H0z" fill="#e8920f" />
        <path d="M4 15v-2h4v2M0 19h12" stroke="#8a4c07" strokeWidth="1.400" />
      </>
    ),
  },
  {
    label: "Word",
    art: (
      <>
        <path d="M6 1h18v22H6z" fill="#2b7cd3" />
        <path d="M6 1h18v6H6z" fill="#41a5ee" />
        <path d="M6 17h18v6H6z" fill="#103f91" />
        <rect x="0" y="6" width="13" height="13" rx="1" fill="#185abd" />
        <path d="M3 9l2 7 1.700-5.500L8.400 16l2-7" stroke="#fff" strokeWidth="1.400" />
      </>
    ),
  },
  {
    label: "KiCad",
    active: true,
    art: (
      <>
        <rect width="24" height="24" rx="4" fill="#314cb0" />
        <text x="3" y="18.500" fontSize="17" fontWeight="700" fill="#fff" fontFamily="Open Sans, sans-serif">K</text>
        <path d="M17.500 10v9" stroke="#fff" strokeWidth="3" />
        <circle cx="18" cy="6" r="2.200" fill="#f08a5b" />
      </>
    ),
  },
  { label: "PCB Editor", run: true, art: pcb },
  {
    label: "Schematic Editor",
    run: true,
    art: (
      <>
        <rect width="24" height="24" rx="3" fill="#999" />
        <path d="M11 0v24M0 8h10M0 15h7l4 4M13 6h11M13 13h5l4 4M5 15v9" stroke="#3a3a3a" strokeWidth="1.800" />
        <path d="M1 11h8M14 9h9M14 20h5" stroke="#ddd" strokeWidth="1.800" />
      </>
    ),
  },
];

function Taskbar() {
  return (
    <footer className="grid h-10 grid-cols-[1fr_auto_1fr] items-center bg-linear-to-r from-[#29221d] via-[#33200f] to-[#2b2218] text-[10px] text-white">
      <div className="flex items-center gap-1 pl-[18px]">
        <div className="relative h-6 w-5">
          <div className="absolute top-1.5 left-0 size-[17px] rounded-full bg-linear-to-br from-[#fcb72e] to-[#ee7a13]" />
          <span className="absolute -top-1 left-[8px] flex size-[13px] items-center justify-center rounded-full bg-[#f98f98] text-[9px] text-[#333]">2</span>
        </div>
        <div className="pl-px leading-[14px]">
          <div>-2°C</div>
          <div className="text-[#c9c4c0]">Sunny</div>
        </div>
      </div>
      <nav aria-label="Taskbar" className="flex items-center">
        <button aria-label="Start">
          <Svg>
            <path d="M0 0h11.300v11.300H0zM12.700 0H24v11.300H12.700zM0 12.700h11.300V24H0zM12.700 12.700H24V24H12.700z" fill="#38b4f2" />
          </Svg>
        </button>
        <button className="mr-3 ml-[13px] flex h-[26px] w-[82px] items-center gap-1 rounded-full bg-[#3d3029] pl-[19px]">
          <svg viewBox="0 0 12 12" className="size-3" fill="none" stroke="#fff" strokeWidth="1.300" aria-hidden="true">
            <circle cx="5" cy="5" r="4" />
            <path d="M8 8l3.500 3.500" />
          </svg>
          Search
        </button>
        <div className="flex w-[423px] justify-between">
          {tasks.map((t) => (
            <button key={t.label} aria-label={t.label} className="relative flex w-5 justify-center py-1.5">
              {t.active && <span className="absolute inset-y-0 -inset-x-2 rounded-[3px] bg-[#42352c]" />}
              <span className="relative">
                <Svg>{t.art}</Svg>
              </span>
              {(t.run || t.active) && (
                <span className={`absolute bottom-0 h-0.5 rounded-full ${t.active ? "w-3 bg-[#f08a6b]" : "w-1.5 bg-[#9b938e]"}`} />
              )}
            </button>
          ))}
        </div>
      </nav>
      <div className="flex items-center justify-end pr-[15px]">
        <svg viewBox="0 0 10 10" className="mr-[17px] size-2.5" fill="none" stroke="#fff" strokeWidth="1.300" aria-hidden="true">
          <path d="M1 7l4-4 4 4" />
        </svg>
        <div className="mr-4 text-center leading-[14px]">
          ENG
          <br />
          IN
        </div>
        <svg viewBox="0 0 14 12" className="mr-1.5 h-3 w-3.5" fill="none" stroke="#fff" strokeWidth="1.100" aria-label="Network">
          <path d="M1 5c3.500-4 8.500-4 12 0M3 7.500c2.500-3 5.500-3 8 0M5 9.500c1.300-1.600 2.700-1.600 4 0" />
          <circle cx="7" cy="10.800" r="0.800" fill="#fff" />
        </svg>
        <svg viewBox="0 0 14 12" className="mr-1.5 h-3 w-3.5" fill="none" stroke="#fff" strokeWidth="1.100" aria-label="Volume">
          <path d="M1 4.500h2L6 2v8L3 7.500H1zM8 4c1 1 1 3 0 4M10 2.500c2 2 2 5 0 7M12 1c2.500 3 2.500 7 0 10" />
        </svg>
        <svg viewBox="0 0 14 10" className="h-2.5 w-3.5" fill="none" stroke="#fff" strokeWidth="1.100" aria-label="Battery">
          <rect x="1" y="1.500" width="10.500" height="7" rx="1.500" />
          <path d="M3 3.500h3v3H3z" fill="#fff" />
          <path d="M13 3.500v3" />
        </svg>
        <div className="w-16 text-right leading-[14px]">
          17:56
          <br />
          20-02-2025
        </div>
        <svg viewBox="0 0 12 14" className="ml-2 h-3.5 w-3" aria-label="Notifications">
          <path d="M6 1a4 4 0 0 1 4 4v4l1.500 2H0.500L2 9V5a4 4 0 0 1 4-4zM4 12h4l-2 1.500z" fill="#fff" />
          <path d="M5 5h3L5 8.500h3" stroke="#333" fill="none" />
        </svg>
      </div>
    </footer>
  );
}

const info = [
  ["Pads", "6"],
  ["Vias", "0"],
  ["Track Segments", "6"],
  ["Nets", "3"],
  ["Unrouted", "0"],
];
const status = [
  "File 'C:\\Users\\LAVANYA\\Downloads\\LED_CIRCUIT\\LED_CIRCUIT.kicad_pcb' saved.",
  "Z 5.42",
  "X 114.5000  Y 78.5000",
  "dx 114.5000  dy 78.5000  dist 138.8254",
  "grid 0.5000",
  "mm",
  "Select item(s)",
  "",
];

export default function App() {
  return (
    <div className="relative flex min-h-screen flex-col overflow-hidden bg-[#f0f0f0] font-['Open_Sans',sans-serif] text-[10px] leading-[14px] text-[#222]">
      <header className="flex h-5 items-center justify-between bg-[#f3f3f3]">
        <div className="flex items-center gap-[5px] pl-px text-[#888]">
          <Svg className="size-3.5">{pcb}</Svg>
          <h1>*LED_CIRCUIT — PCB Editor</h1>
        </div>
        <div className="flex items-center gap-[29px] pr-4">
          {[
            ["Minimize", "M0.500 5h9"],
            ["Restore", "M1 3h6v6.500H1zM3 3V1h6v6.500H7"],
            ["Close window", "M1 1l8 8M9 1L1 9"],
          ].map(([l, d]) => (
            <button key={l} aria-label={l}>
              <svg viewBox="0 0 10 10" className="size-2.5" fill="none" stroke="#999" aria-hidden="true">
                <path d={d} />
              </svg>
            </button>
          ))}
        </div>
      </header>
      <nav aria-label="Menu" className="flex h-[15px] items-center gap-[11px] bg-white pl-1.5 text-[#666]">
        {["File", "Edit", "View", "Place", "Route", "Inspect", "Tools", "Preferences", "Help"].map((m) => (
          <button key={m}>{m}</button>
        ))}
      </nav>
      <div role="toolbar" aria-label="Main" className="flex h-[30px] items-center gap-1.5 bg-[#f0f0f0] pt-0.5 pl-[7px]">
        {topGroups.map((g, i) => (
          <React.Fragment key={i}>
            {i > 0 && <div className="h-[22px] w-px bg-[#a0a0a0]" />}
            <div className={`flex justify-between ${g.width}`}>
              {g.items.map(([icon, label]) => (
                <button key={icon} aria-label={label}>
                  <Svg>{icons[icon]}</Svg>
                </button>
              ))}
            </div>
          </React.Fragment>
        ))}
      </div>
      <div className="flex h-[30px] bg-[#dcdcdc]">
        <div className="flex items-center gap-1 bg-[#f0f0f0] pr-[5px] pl-1">
          <Select value="Track: use netclass width" label="Track width" className="w-32" />
          <button aria-label="Auto track width" className="h-6 w-6 border border-[#3b8fd4] bg-[#b5d6f2]" />
          <div className="h-[22px] w-px bg-[#a0a0a0]" />
          <Select value="Via: use netclass sizes" label="Via size" className="w-[122px]" />
          <div className="h-[22px] w-px bg-[#a0a0a0]" />
          <Select value="F.Cu (PgUp)" label="Layer" className="w-[105px]" />
          <div className="flex h-5 w-5">
            <span className="w-3/4 bg-[#c83434]" />
            <span className="w-1/4 bg-[#4d7fc4]" />
          </div>
          <div className="h-[22px] w-px bg-[#a0a0a0]" />
          <Select value="0.5000 mm (19.69 mils)" label="Grid" className="w-[140px]" />
          <div className="h-[22px] w-px bg-[#a0a0a0]" />
          <Select value="Zoom 5.00" label="Zoom" className="w-[79px]" />
        </div>
      </div>
      <main className="flex flex-1">
        <SideBar groups={leftGroups} label="Display options" />
        <div className="relative min-w-0 flex-1 overflow-hidden border-t border-[#3f4c5a] bg-[#000e20]">
          <Board />
        </div>
        <SideBar groups={rightGroups} label="Drawing tools" />
        <div className="w-1 bg-[#e2e2e2]" />
        <AppearancePanel />
      </main>
      <div className="grid h-[27px] grid-cols-[46px_43px_95px_46px_auto] border-t border-[#c5c5c5] pt-px pl-[9px] leading-[13px] text-[#777]">
        {info.map(([k, v]) => (
          <div key={k}>
            <div>{k}</div>
            <div>{v}</div>
          </div>
        ))}
      </div>
      <div className="grid h-[19px] grid-cols-[389fr_65fr_135fr_214fr_156fr_52fr_143fr_126fr] border-t border-[#dcdcdc] font-[Roboto,sans-serif] text-[#111]">
        {status.map((s, i) => (
          <div key={i} className="border-r border-[#d5d5d5] pl-0.5 leading-[20px] whitespace-pre">
            {s}
          </div>
        ))}
      </div>
      <Taskbar />
      <DrcDialog />
    </div>
  );
}
